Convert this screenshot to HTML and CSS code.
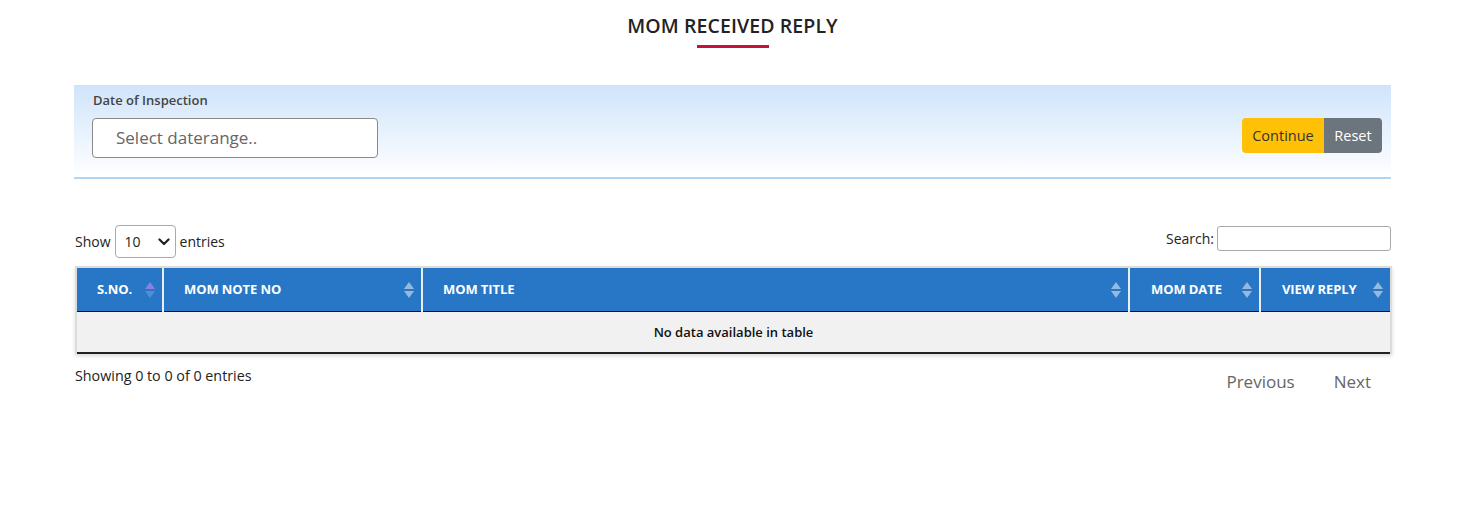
FILE: index.html
```html
<!DOCTYPE html>
<html>
<head>
<meta charset="utf-8">
<link rel="stylesheet" href="styles.css">
</head>
<body>
<div class="page">
  <div class="title-wrap">
    <h2 class="title">MOM RECEIVED REPLY</h2>
    <div class="title-bar"></div>
  </div>

  <div class="filter">
    <div class="field">
      <label class="field-label">Date of Inspection</label>
      <div class="date-input">Select daterange..</div>
    </div>
    <div class="btn-group">
      <button class="btn btn-continue">Continue</button>
      <button class="btn btn-reset">Reset</button>
    </div>
  </div>

  <div class="dt-top">
    <div class="length">Show
      <span class="select">10
        <svg width="12" height="8" viewBox="0 0 12 8"><path d="M1.5 1.5 L6 6 L10.5 1.5" fill="none" stroke="#222" stroke-width="2.2" stroke-linecap="round" stroke-linejoin="round"/></svg>
      </span>
      entries</div>
    <div class="search">Search: <span class="search-input"></span></div>
  </div>

  <div class="table-wrap">
    <table class="dt">
      <thead>
        <tr>
          <th class="c1"><span>S.NO.</span><span class="sort asc"><i class="up"></i><i class="dn"></i></span></th>
          <th class="c2"><span>MOM NOTE NO</span><span class="sort"><i class="up"></i><i class="dn"></i></span></th>
          <th class="c3"><span>MOM TITLE</span><span class="sort"><i class="up"></i><i class="dn"></i></span></th>
          <th class="c4"><span>MOM DATE</span><span class="sort"><i class="up"></i><i class="dn"></i></span></th>
          <th class="c5"><span>VIEW REPLY</span><span class="sort"><i class="up"></i><i class="dn"></i></span></th>
        </tr>
      </thead>
      <tbody>
        <tr><td colspan="5" class="empty">No data available in table</td></tr>
      </tbody>
    </table>
  </div>

  <div class="dt-bottom">
    <div class="info">Showing 0 to 0 of 0 entries</div>
    <div class="paging">
      <span class="pg">Previous</span>
      <span class="pg">Next</span>
    </div>
  </div>
</div>
</body>
</html>
```
FILE: styles.css
```css
* { box-sizing: border-box; }
body {
  margin: 0;
  font-family: "Open Sans", "Noto Sans", sans-serif;
  color: #212529;
  background: #fff;
}
.page {
  width: 1317px;
  margin-left: 74px;
  padding-top: 13px;
}
.title-wrap {
  display: flex;
  flex-direction: column;
  align-items: center;
}
.title {
  margin: 0;
  font-size: 19.5px;
  font-weight: 600;
  line-height: 26px;
  color: #222;
  letter-spacing: 0.1px;
}
.title-bar {
  width: 72px;
  height: 3px;
  background: #c8103c;
  margin-top: 6px;
}
.filter {
  margin-top: 37px;
  height: 94px;
  background: linear-gradient(to bottom, #cfe4fb 0%, #ffffff 100%);
  border-bottom: 2px solid #b0d4f2;
  display: flex;
  justify-content: space-between;
  align-items: flex-start;
  padding: 7px 9px 0 18px;
}
.field { display: flex; flex-direction: column; }
.field-label {
  font-size: 13px;
  font-weight: 600;
  color: #444;
  line-height: 16px;
  margin-left: 1px;
}
.date-input {
  margin-top: 10px;
  width: 286px;
  height: 40px;
  border: 1px solid #8a8a8a;
  border-radius: 4px;
  background: #fff;
  font-size: 17px;
  color: #666;
  padding-left: 23px;
  line-height: 38px;
}
.btn-group { display: flex; margin-top: 26px; }
.btn {
  border: none;
  height: 35px;
  font-family: inherit;
  font-size: 14.5px;
  padding: 0;
  margin: 0;
}
.btn-continue {
  width: 82px;
  background: #ffc107;
  color: #333;
  border-radius: 4px 0 0 4px;
}
.btn-reset {
  width: 58px;
  background: #6c757d;
  color: #fff;
  border-radius: 0 4px 4px 0;
}
.dt-top {
  margin-top: 46px;
  display: flex;
  justify-content: space-between;
  align-items: center;
  font-size: 14px;
  color: #222;
}
.length { display: flex; align-items: center; margin-left: 1px; }
.select {
  display: inline-flex;
  align-items: center;
  justify-content: space-between;
  width: 61px;
  height: 33px;
  border: 1px solid #aaa;
  border-radius: 4px;
  margin: 0 4px;
  padding: 0 5px 0 9px;
  font-size: 14px;
}
.search { display: flex; align-items: center; margin-top: -6px; }
.search-input {
  display: inline-block;
  width: 174px;
  height: 25px;
  border: 1px solid #aaa;
  border-radius: 3px;
  margin-left: 3px;
}
.table-wrap {
  margin-top: 8px;
  margin-left: 1px;
  width: 1317px;
  border: 2px solid #dcdcdc;
  border-bottom: none;
  box-shadow: 0 2px 4px rgba(0,0,0,0.15);
}
.dt {
  width: 100%;
  border-collapse: collapse;
  table-layout: fixed;
}
.dt th {
  background: #2877c7;
  color: #fff;
  font-size: 13px;
  font-weight: 700;
  text-align: left;
  height: 43px;
  padding: 0 0 0 20px;
  border-left: 2px solid #e9eef3;
  border-bottom: 1px solid #111;
  position: relative;
  letter-spacing: -0.1px;
}
.dt th:first-child { border-left: none; }
.c1 { width: 86px; }
.c2 { width: 259px; }
.c3 { width: 707px; }
.c4 { width: 131px; }
.c5 { width: 130px; }
.dt th.c4, .dt th.c5 { padding-left: 21px; }
.sort {
  position: absolute;
  right: 7px;
  top: 14px;
  width: 10px;
  height: 16px;
}
.sort i {
  position: absolute;
  left: 0;
  width: 0;
  height: 0;
  border-left: 5px solid transparent;
  border-right: 5px solid transparent;
}
.sort .up { top: 0; border-bottom: 7px solid rgba(225,230,236,0.6); }
.sort .dn { top: 9px; border-top: 7px solid rgba(225,230,236,0.6); }
.sort.asc .up { border-bottom-color: #8d7ee0; }
.sort.asc .dn { border-top-color: rgba(255,255,255,0.18); }
.dt td.empty {
  background: #f1f1f1;
  text-align: center;
  font-size: 13px;
  font-weight: 600;
  color: #111;
  height: 42px;
  padding-top: 2px;
  border-bottom: 2px solid #222;
}
.dt-bottom {
  display: flex;
  justify-content: space-between;
  align-items: flex-start;
  margin-top: 12px;
  margin-left: 1px;
}
.info { font-size: 14.3px; color: #222; }
.paging { display: flex; margin-top: 4px; margin-right: 1px; }
.pg {
  font-size: 17px;
  color: #666;
  padding: 0 19px 0 20px;
}
.pg:first-child { padding-left: 22px; padding-right: 17px; }
.pg + .pg { padding-left: 22px; }
```
